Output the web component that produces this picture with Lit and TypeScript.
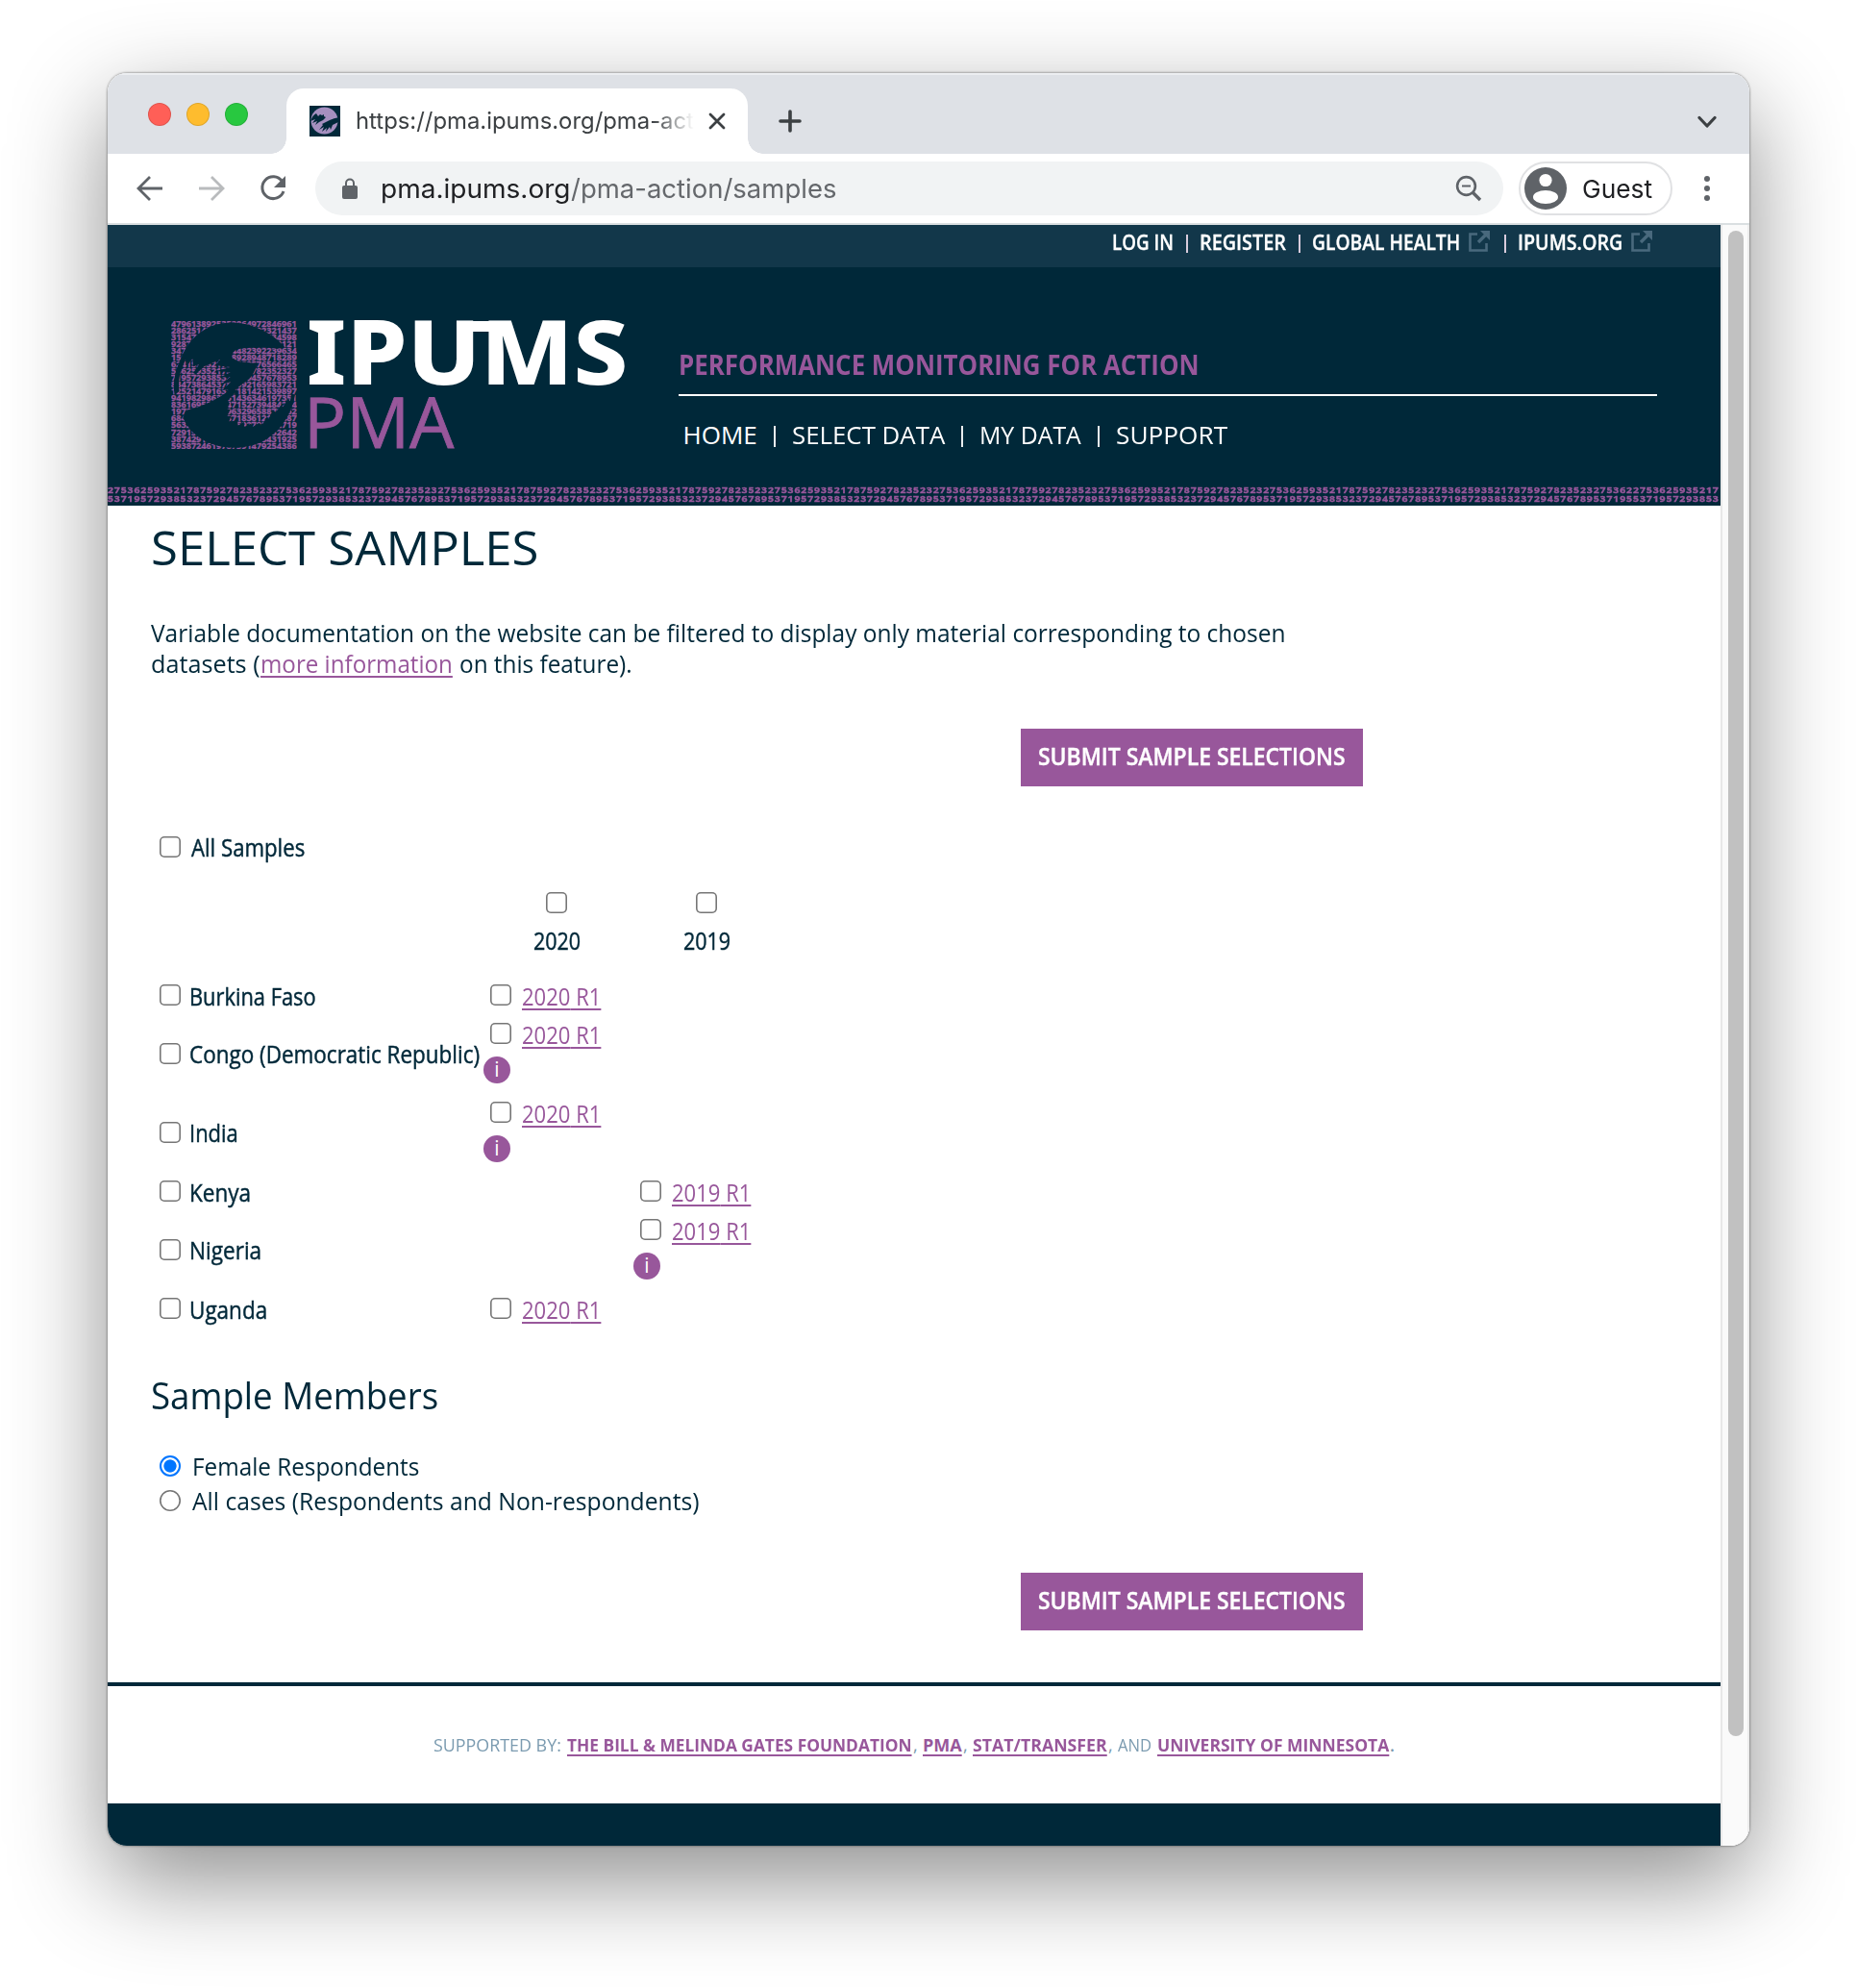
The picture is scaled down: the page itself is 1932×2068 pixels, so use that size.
import { LitElement, html, svg, css, nothing } from "lit";
import { customElement, property, state } from "lit/decorators.js";

/** A single line of text condensed or widened to a fixed measure. */
@customElement("fit-text")
class FitText extends LitElement {
  @property({ type: Number }) w = 100;
  /** Measure the drawn glyphs instead of their advance widths. */
  @property({ type: Boolean }) ink = false;
  @state() scale = 1;
  @state() shift = 0;
  static styles = css`
    :host { display: inline-block; white-space: nowrap; text-align: left; flex: none; }
    .line { display: inline-block; transform-origin: 0 50%; white-space: nowrap; }
    :host(.link) .line { text-decoration: underline; text-decoration-thickness: 2px; text-underline-offset: 2.5px; text-decoration-skip-ink: none; }
    .box { width: 0; white-space: nowrap; }
  `;
  firstUpdated() {
    const line = this.renderRoot.querySelector(".line") as HTMLElement;
    const natural = line.offsetWidth;
    if (!natural) return;
    if (this.ink) {
      const cs = getComputedStyle(line);
      const ctx = document.createElement("canvas").getContext("2d")!;
      ctx.font = `${cs.fontWeight} ${cs.fontSize} ${cs.fontFamily}`;
      const m = ctx.measureText((this.textContent ?? "").trim());
      this.scale = this.w / (m.actualBoundingBoxLeft + m.actualBoundingBoxRight);
      this.shift = m.actualBoundingBoxLeft * this.scale;
    } else {
      this.scale = this.w / natural;
    }
  }
  render() {
    return html`<div style="width:${this.w}px"><div class="box"><span class="line" style="transform:translateX(${this.shift}px) scaleX(${this.scale})"><slot></slot></span></div></div>`;
  }
}

@customElement("tick-box")
class TickBox extends LitElement {
  @property() kind = "checkbox";
  @property({ type: Boolean }) on = false;
  static styles = css`
    :host { display: block; width: 22px; height: 22px; flex: none; }
    .box { appearance: none; display: block; box-sizing: border-box; width: 22px; height: 22px; margin: 0; border: 0; box-shadow: inset 0 0 0 1.6px #767676; border-radius: 5px; background: #fff; }
    .radio { border-radius: 50%; }
    .radio:checked { box-shadow: none; border: 2px solid #0075ff; background: radial-gradient(circle, #0075ff 6.2px, #fff 7px); }
  `;
  render() {
    return html`<input class="box ${this.kind}" type=${this.kind} .checked=${this.on} />`;
  }
}

const LOGO_FILL = "5362593521787592782352371";
/** Left and right ends of each line of digits; the middle is filler. */
const LOGO_ENDS: [string, string][] = [
  ["479613892535286", "4972846961"], ["286251479", "321437"], ["315479", "34598"], ["9287", "121"],
  ["347", "4482392239634"], ["15", "78928948718289"], ["6241", "576566465"],
  ["5362593521757", "782352327"], ["719572938532", "9457678953"], ["8347386453", "2165983721"],
  ["125214791637", "181421539897"], ["9419829863", "31436346197351"], ["8361695", "47152739484214"],
  ["197", "96329658879262"], ["684", "183612171487"], ["5632", "2719"], ["72915", "52642"],
  ["3874291", "6431925"], ["5938724619", "1479254386"],
];

@customElement("digit-logo")
class DigitLogo extends LitElement {
  static styles = css`
    :host { display: block; width: 131px; height: 133px; flex: none; }
    .art { display: block; width: 131px; height: 133px; }
    .digits { font: 700 25px "Open Sans", sans-serif; fill: #98579b; stroke: #98579b; stroke-width: .9px; }
    .cut { fill: #002839; }
  `;
  render() {
    return html`<svg class="art" viewBox="53 70 393 399" preserveAspectRatio="none">
      ${LOGO_ENDS.map(([a, b], i) => svg`<text class="digits" x="53" y=${88 + i * 21.1} textLength="392" lengthAdjust="spacingAndGlyphs">${a + LOGO_FILL.slice(a.length, 25 - b.length) + b}</text>`)}
      <path class="cut" d="M64 300 Q54 250 82 190 Q110 115 180 85 Q250 62 320 90 Q375 112 408 152 L385 156 Q330 146 262 158 Q240 165 243 185 L262 196 L322 202 Q312 240 290 256 Q262 275 246 292 L236 298 L230 284 L212 286 L240 260 L208 268 L238 244 L204 246 L238 230 L194 226 L238 214 L192 208 L206 190 L156 212 L130 236 L122 232 L140 206 L122 212 L120 186 L104 208 L98 190 L86 220 Q74 250 78 290 Z"/>
      <path class="cut" d="M238 284 Q180 330 98 350 L90 372 Q110 420 165 448 Q250 482 330 450 Q420 405 440 300 L430 298 L424 320 L418 312 L402 338 L396 332 L380 354 L372 350 L356 376 L350 372 L336 396 L328 388 L308 400 L302 390 L282 400 L280 384 L262 396 L260 380 L234 384 L240 366 L228 366 L238 346 L228 344 L236 326 L228 322 L242 304 L262 286 Z"/>
    </svg>`;
  }
}

interface Row { country: string; w: number; col: number; info: boolean }

const ROWS: Row[] = [
  { country: "Burkina Faso", w: 132, col: 0, info: false },
  { country: "Congo (Democratic Republic)", w: 302, col: 0, info: true },
  { country: "India", w: 51, col: 0, info: true },
  { country: "Kenya", w: 64, col: 1, info: false },
  { country: "Nigeria", w: 75, col: 1, info: true },
  { country: "Uganda", w: 81, col: 0, info: false },
];
const YEARS = ["2020", "2019"];
const STRIP = ["2753625935217875927823523", "5371957293853237294576789"];

@customElement("app-root")
class AppRoot extends LitElement {
  static styles = css`
    :host { display: block; width: 1932px; height: 2068px; box-sizing: border-box; padding: 76px 112px 148px; background: #fff; overflow: hidden; font-family: "Open Sans", sans-serif; color: #002839; }
    .window { display: flex; flex-direction: column; width: 1708px; height: 1844px; border-radius: 20px; overflow: hidden; background: #fff; }
    .frame { border-radius: 20px; box-shadow: 0 36px 100px rgba(0,0,0,.45), 0 0 2px 1px rgba(0,0,0,.28); }

    .tabs { display: flex; height: 84px; background: #dee1e6; box-shadow: inset 0 2px 0 #eceef1; }
    .lights { display: flex; gap: 16px; padding: 31px 0 0 42px; width: 144px; }
    .light { width: 24px; height: 24px; border-radius: 50%; box-sizing: border-box; border: 1px solid rgba(0,0,0,.12); }
    .red { background: #ff5f57; } .amber { background: #febc2e; } .green { background: #28c840; }
    .tab { position: relative; display: flex; align-items: center; width: 480px; height: 68px; margin-top: 16px; box-sizing: border-box; padding: 0 0 0 24px; border-radius: 18px 18px 0 0; background: #fff; }
    .flare { position: absolute; bottom: 0; width: 16px; height: 16px; }
    .fl { left: -16px; background: radial-gradient(circle at 0 0, transparent 15.5px, #fff 16px); }
    .fr { right: -16px; background: radial-gradient(circle at 100% 0, transparent 15.5px, #fff 16px); }
    .fav { width: 32px; height: 32px; }
    .tabtitle { margin-left: 16px; width: 352px; font: 400 24px/32px "Inter", sans-serif; color: #3c4043; mask-image: linear-gradient(90deg, #000 310px, transparent 352px); }
    .close { width: 18px; height: 18px; margin-left: 15px; }
    .plus { width: 24px; height: 24px; margin: 38px 0 0 32px; }
    .chev { width: 20px; height: 14px; margin: 44px 34px 0 auto; }

    .toolbar { display: flex; align-items: center; height: 74px; box-sizing: border-box; border-bottom: 2px solid #dadfe1; padding-left: 28px; }
    .nav { width: 32px; height: 32px; margin-right: 32px; }
    .reload { margin-right: 28px; }
    .omni { display: flex; align-items: center; width: 1236px; height: 56px; border-radius: 28px; background: #f1f3f4; box-sizing: border-box; padding-left: 28px; font: 400 27.6px/56px "Inter", sans-serif; color: #202124; }
    .lock { width: 16px; height: 22px; margin-right: 24px; }
    .path { color: #65686c; }
    .mag { width: 28px; height: 28px; margin-left: auto; margin-right: 22px; }
    .guest { display: flex; align-items: center; width: 160px; height: 56px; box-sizing: border-box; border: 2px solid #e0e1e3; border-radius: 28px; margin-left: 16px; padding-left: 4px; font: 400 26px/52px "Inter", sans-serif; color: #202124; }
    .who { margin-top: 2px; }
    .avatar { width: 44px; height: 44px; margin-right: 16px; }
    .dots { width: 6px; height: 28px; margin-left: 33px; }

    .view { display: flex; height: 1686px; }
    .page { width: 1678px; height: 1686px; display: flex; flex-direction: column; }
    .scroll { width: 30px; box-sizing: border-box; background: #fafafa; border-left: 2px solid #e8e8e8; border-right: 2px solid #ededed; padding: 6px 0 0 6px; }
    .thumb { width: 16px; height: 1566px; border-radius: 8px; background: #c1c1c1; }

    .top { display: flex; height: 44px; background: #12374a; color: #fff; font-size: 22px; font-weight: 600; line-height: 35px; padding-left: 1044.5px; -webkit-text-stroke: .3px #fff; }
    .bar { width: 2px; height: 19px; background: #d8cbdc; margin: 10px 12px 0 13px; flex: none; }
    .ext { width: 22px; height: 22px; margin: 6px 0 0 9px; flex: none; }
    .ext-wide { margin-right: 2px; }

    .head { height: 227px; background: #002839; display: flex; padding-left: 66px; box-sizing: border-box; }
    .mark { margin-top: 56px; width: 131px; }
    .words { margin: 56px 0 0 12px; width: 330px; position: relative; }
    .w1 { display: block; height: 60px; line-height: 60px; font-family: "Noto Sans", sans-serif; font-weight: 800; font-size: 92.4px; color: #fff; margin-left: 1px; }
    .w2 { display: block; height: 86px; line-height: 88px; font-size: 73.5px; color: #98579b; margin-left: 2px; -webkit-text-stroke: .8px #98579b; }
    .titles { margin-left: 55px; width: 1018px; padding-top: 81px; }
    .tag { height: 51px; line-height: 41px; font-size: 28px; font-weight: 700; color: #98579b; border-bottom: 2px solid #fff; }
    .menu { display: flex; align-items: center; height: 40px; margin-top: 20px; line-height: 40px; font-size: 26px; color: #fff; padding-left: 4.5px; }
    .sep { width: 2px; height: 22px; background: #e8ecee; margin: 4px 17px 0 17px; flex: none; }
    .strip { height: 21px; background: #002839; color: #98579b; font-size: 9.6px; font-weight: 700; letter-spacing: .8px; overflow: hidden; -webkit-text-stroke: .4px #98579b; }
    .digits { display: flex; height: 9.2px; line-height: 9.2px; width: 1678px; }

    .main { height: 1224px; padding-left: 45px; display: flex; flex-direction: column; box-sizing: border-box; }
    .h1 { margin: 13px 0 0; height: 60px; line-height: 60px; font-size: 50px; font-weight: 400; }
    .para { margin: 43px 0 0; height: 64px; line-height: 32px; font-size: 25px; }
    .line { display: flex; height: 32px; }
    .link { color: #98579b; }
    .after { margin-left: 7px; }
    .btn { display: block; margin: 52px 0 0 905px; width: 356px; height: 60px; padding: 0 0 4px 17.5px; box-sizing: border-box; border: 0; border-radius: 0; background: #98579b; color: #fff; font: 600 26px/56px "Open Sans", sans-serif; text-align: left; -webkit-text-stroke: .4px #fff; flex: none; }
    .btn2 { margin-top: 57px; }
    .all { display: flex; align-items: center; height: 40px; margin-top: 43px; padding-left: 9px; line-height: 40px; font-size: 25px; -webkit-text-stroke: .45px #002839; }
    .gap11 { margin-left: 11px; } .gap9 { margin-left: 9px; } .gap12 { margin-left: 12px; }
    .years { display: grid; grid-template-columns: 156px 156px; margin: 27px 0 0 344px; height: 88px; font-size: 25px; line-height: 40px; -webkit-text-stroke: .45px #002839; }
    .year { display: flex; flex-direction: column; align-items: center; gap: 8px; }
    .grid { display: grid; grid-template-columns: 344px 156px 156px; font-size: 25px; }
    .country { display: flex; align-items: center; padding-left: 9px; line-height: 40px; -webkit-text-stroke: .45px #002839; }
    .cell { min-height: 40px; }
    .tall { height: 82px; }
    .lift { margin-top: -2px; }
    .pick { display: flex; align-items: center; height: 40px; line-height: 40px; padding-left: 9px; }
    .up { margin-top: -2px; }
    .info { width: 28px; height: 28px; margin: 3px 0 0 2px; border-radius: 50%; background: #98579b; color: #fff; font-size: 21px; line-height: 27px; text-align: center; }
    .h2 { margin: 45px 0 0; height: 48px; line-height: 48px; font-size: 38px; font-weight: 400; }
    .radios { margin-top: 32px; }
    .opt { display: flex; align-items: center; height: 36px; line-height: 36px; font-size: 25px; padding-left: 9px; }

    .support { height: 126px; border-top: 4px solid #002839; box-sizing: border-box; display: flex; padding-left: 339px; color: #7b9bb0; font-size: 18px; line-height: 120px; padding-top: 1px; }
    .strong { font-weight: 700; }
    .comma { margin: 0 5px 0 1px; } .sp { margin-right: 6px; } .stop { margin-left: 1px; font-weight: 600; }
    .foot { height: 44px; background: #002839; }
    .joint { position: absolute; left: 0; top: 0; width: 330px; height: 12px; }
  `;

  private ext(wide = false) {
    return html`<svg class="ext ${wide ? "ext-wide" : ""}" viewBox="0 0 22 22" fill="none" stroke="#49697d" stroke-width="2.6"><path d="M9 3.5H1.5V20.5H18.5V13"/><path d="M10 12 19 3" stroke-width="3.4"/><path d="M12 0H22V10Z" fill="#49697d" stroke="none"/></svg>`;
  }

  private digits(base: string) {
    const tile = base.repeat(9) + base.slice(0, 6);
    return html`<div class="digits"><fit-text w="1587">${tile}</fit-text><fit-text w="90">${base.slice(0, 13)}</fit-text></div>`;
  }

  private chrome() {
    return html`
      <div class="tabs">
        <div class="lights"><span class="light red"></span><span class="light amber"></span><span class="light green"></span></div>
        <div class="tab">
          <span class="flare fl"></span><span class="flare fr"></span>
          <svg class="fav" viewBox="0 0 32 32"><rect width="32" height="32" fill="#002839"/><circle cx="15.500" cy="15.500" r="14" fill="#a58fbf"/>
            <path d="M1 16Q3 10 7 8L9 11 11 9 13 10 15 9 15 11 17 12 14 15 10 17 6 20 8 16 3 18 6 14Z" fill="#002839"/>
            <path d="M31 12Q25 13 21 15L13 19 14 20 10 25 15 22 13 27 18 23 17 27 21 22 22 25 24 20 30 17Z" fill="#002839"/></svg>
          <div class="tabtitle"><fit-text w="352">https://pma.ipums.org/pma-act</fit-text></div>
          <svg class="close" viewBox="0 0 18 18" stroke="#3c4043" stroke-width="2.800" stroke-linecap="round"><path d="M2 2 16 16M16 2 2 16"/></svg>
        </div>
        <svg class="plus" viewBox="0 0 24 24" stroke="#3c4043" stroke-width="3.600" stroke-linecap="round"><path d="M12 2V22M2 12H22"/></svg>
        <svg class="chev" viewBox="0 0 20 14" fill="none" stroke="#3c4043" stroke-width="3.200" stroke-linecap="round" stroke-linejoin="round"><path d="M2 2.500 10 11 18 2.500"/></svg>
      </div>
      <div class="toolbar">
        <svg class="nav" viewBox="0 0 32 32" fill="none" stroke="#5f6368" stroke-width="2.800"><path d="M29 16H5M16 4 4 16 16 28"/></svg>
        <svg class="nav" viewBox="0 0 32 32" fill="none" stroke="#b9bbbd" stroke-width="2.800"><path d="M3 16H27M16 4 28 16 16 28"/></svg>
        <svg class="nav reload" viewBox="0 0 32 32" fill="none" stroke="#5f6368" stroke-width="3"><path d="M25.500 8.500A11.400 11.400 0 1 0 27 19"/><path d="M29 3V15H17Z" fill="#5f6368" stroke="none"/></svg>
        <div class="omni">
          <svg class="lock" viewBox="0 0 16 22"><rect y="8" width="16" height="14" rx="2" fill="#5f6368"/><path d="M4 9V5.500a4 4 0 0 1 8 0V9" fill="none" stroke="#5f6368" stroke-width="2"/></svg>
          <fit-text w="198">pma.ipums.org</fit-text><fit-text class="path" w="276">/pma-action/samples</fit-text>
          <svg class="mag" viewBox="0 0 28 28" fill="none" stroke="#5f6368" stroke-width="2.600"><circle cx="11.500" cy="11.500" r="9.400"/><path d="M7 11.500H16" stroke-width="2.200"/><path d="M18.500 18.500 26 26" stroke-width="3.400"/></svg>
        </div>
        <div class="guest">
          <svg class="avatar" viewBox="0 0 44 44"><circle cx="22" cy="22" r="22" fill="#5f6368"/><circle cx="22" cy="13.500" r="6.600" fill="#fff"/><ellipse cx="22" cy="31" rx="13" ry="7" fill="#fff"/></svg>
          <fit-text class="who" w="73">Guest</fit-text>
        </div>
        <svg class="dots" viewBox="0 0 6 28" fill="#5f6368"><circle cx="3" cy="4" r="3"/><circle cx="3" cy="14" r="3"/><circle cx="3" cy="24" r="3"/></svg>
      </div>`;
  }

  private header() {
    return html`
      <div class="top">
        <fit-text w="64">LOG IN</fit-text><i class="bar"></i><fit-text w="90">REGISTER</fit-text><i class="bar"></i>
        <fit-text w="154">GLOBAL HEALTH</fit-text>${this.ext(true)}<i class="bar"></i><fit-text w="109">IPUMS.ORG</fit-text>${this.ext()}
      </div>
      <div class="head">
        <div class="mark"><digit-logo></digit-logo></div>
        <div class="words"><fit-text class="w1" ink w="328">IPUMS</fit-text><fit-text class="w2" ink w="150">PMA</fit-text>
          <svg class="joint" viewBox="0 0 330 12" fill="#fff"><path d="M160 0H196V11H160Z"/></svg></div>
        <div class="titles">
          <div class="tag"><fit-text w="542">PERFORMANCE MONITORING FOR ACTION</fit-text></div>
          <div class="menu"><fit-text w="77">HOME</fit-text><i class="sep"></i><fit-text w="159">SELECT DATA</fit-text><i class="sep"></i><fit-text w="106">MY DATA</fit-text><i class="sep"></i><fit-text w="116">SUPPORT</fit-text></div>
        </div>
      </div>
      <div class="strip">${STRIP.map((s) => this.digits(s))}</div>`;
  }

  private row(r: Row) {
    const cell = (c: number) => html`<div class="cell">${c === r.col
      ? html`<div class="pick"><tick-box class="up"></tick-box><fit-text class="gap11 link" w="82">${YEARS[c]} R1</fit-text></div>${r.info ? html`<div class="info">i</div>` : nothing}`
      : nothing}</div>`;
    return html`<div class="country ${r.info ? "tall" : ""}"><tick-box class="up"></tick-box><fit-text class="gap9 ${r.info ? "lift" : ""}" w=${r.w}>${r.country}</fit-text></div>${cell(0)}${cell(1)}`;
  }

  private content() {
    return html`<div class="main">
      <h1 class="h1"><fit-text w="403">SELECT SAMPLES</fit-text></h1>
      <div class="para">
        <div class="line"><fit-text w="1181">Variable documentation on the website can be filtered to display only material corresponding to chosen</fit-text></div>
        <div class="line"><fit-text w="114">datasets (</fit-text><fit-text class="link" w="200">more information</fit-text><fit-text class="after" w="180">on this feature).</fit-text></div>
      </div>
      <button class="btn"><fit-text w="320">SUBMIT SAMPLE SELECTIONS</fit-text></button>
      <div class="all"><tick-box></tick-box><fit-text class="gap11" w="118">All Samples</fit-text></div>
      <div class="years">${YEARS.map((y) => html`<div class="year"><tick-box></tick-box><fit-text w="49">${y}</fit-text></div>`)}</div>
      <div class="grid">${ROWS.map((r) => this.row(r))}</div>
      <h2 class="h2"><fit-text w="299">Sample Members</fit-text></h2>
      <div class="radios">
        <div class="opt"><tick-box kind="radio" on></tick-box><fit-text class="gap12" w="236">Female Respondents</fit-text></div>
        <div class="opt"><tick-box kind="radio"></tick-box><fit-text class="gap12" w="528">All cases (Respondents and Non-respondents)</fit-text></div>
      </div>
      <button class="btn btn2"><fit-text w="320">SUBMIT SAMPLE SELECTIONS</fit-text></button>
    </div>`;
  }

  render() {
    return html`<div class="frame"><div class="window">
      ${this.chrome()}
      <div class="view">
        <div class="page">
          ${this.header()}
          ${this.content()}
          <div class="support">
            <fit-text class="sp" w="133">SUPPORTED BY:</fit-text><fit-text class="link strong" w="359">THE BILL &amp; MELINDA GATES FOUNDATION</fit-text><fit-text class="comma" w="5">,</fit-text>
            <fit-text class="link strong" w="41">PMA</fit-text><fit-text class="comma" w="5">,</fit-text><fit-text class="link strong" w="140">STAT/TRANSFER</fit-text><fit-text class="comma" w="5">,</fit-text>
            <fit-text class="sp" w="35">AND</fit-text><fit-text class="link strong" w="241">UNIVERSITY OF MINNESOTA</fit-text><fit-text class="stop" w="5">.</fit-text>
          </div>
          <div class="foot"></div>
        </div>
        <div class="scroll"><div class="thumb"></div></div>
      </div>
    </div></div>`;
  }
}
